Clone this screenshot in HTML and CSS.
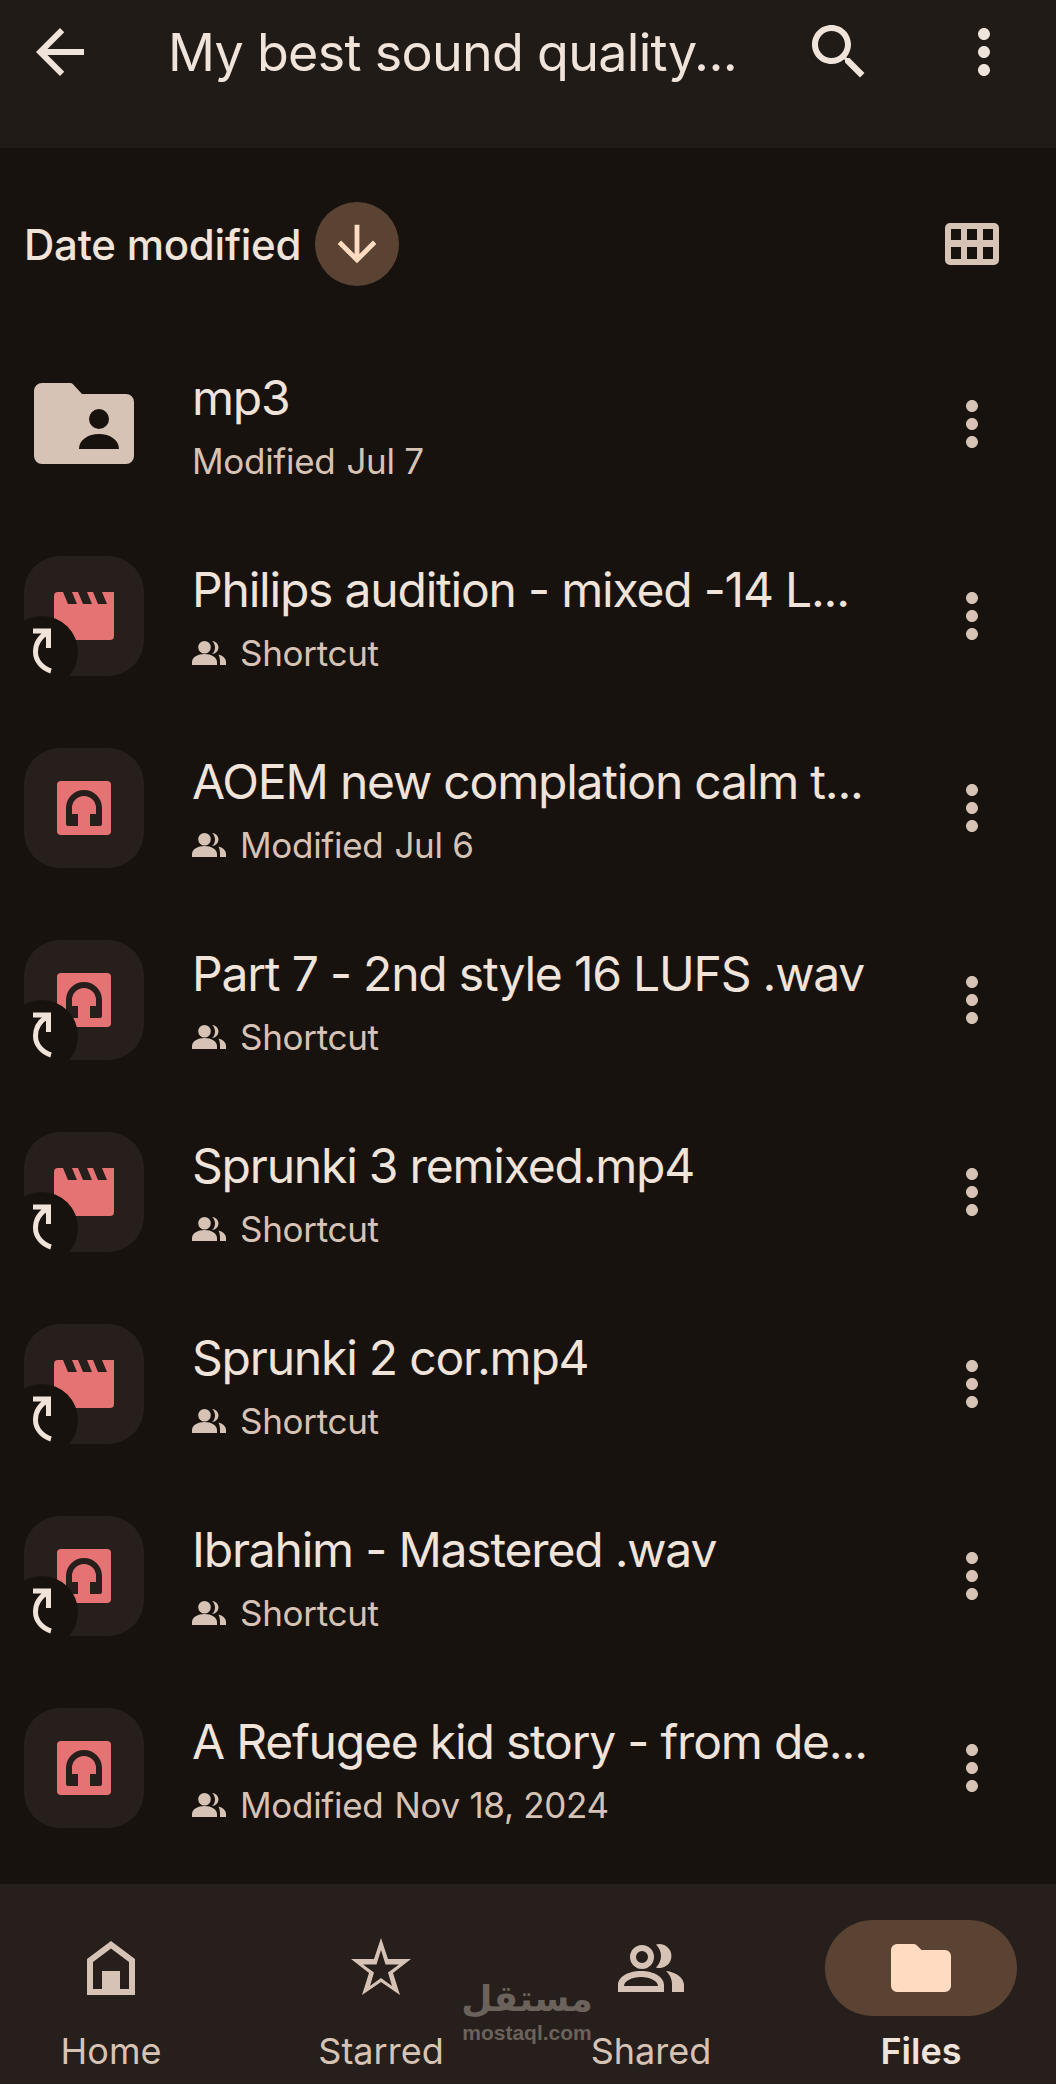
FILE: index.html
```html
<!DOCTYPE html>
<html>
<head>
    <title>My best sound quality</title>
    <meta charset="utf-8">
    <link rel="stylesheet" href="styles.css">
</head>
<body>
<svg class="defs" width="0" height="0">
    <symbol id="dots" viewBox="0 0 24 24"><path d="M12 8c1.100 0 2-.9 2-2s-.9-2-2-2-2 .9-2 2 .9 2 2 2zm0 2c-1.100 0-2 .9-2 2s.9 2 2 2 2-.9 2-2-.9-2-2-2zm0 6c-1.100 0-2 .9-2 2s.9 2 2 2 2-.9 2-2-.9-2-2-2z"/></symbol>
    <symbol id="people" viewBox="0 0 34 24"><path d="M12.500 0a6.300 6.300 0 1 1 0 12.600 6.300 6.300 0 0 1 0-12.600zM20 0a6.500 6.500 0 0 1 0 13c2-1.500 3-4 3-6.500S22 1.500 20 0zM0 24v-3c0-5 6-8 12.500-8S25 16 25 21v3zM26.500 13.500c4 1 7.500 3.500 7.500 7.500v3h-6v-3c0-3-.5-5.500-1.500-7.500z"/></symbol>
    <symbol id="shortcut" viewBox="0 0 120 120"><circle cx="18" cy="96" r="36" class="badge"/><path d="M9 75h15.500v17M24.500 76C15 81 11.500 89 11.500 96c0 9 7 16.500 15.500 19" class="arrow"/></symbol>
    <symbol id="video" viewBox="0 0 120 120"><path class="red" d="M34 36h56v44a4 4 0 0 1-4 4H30V40a4 4 0 0 1 4-4z"/><path class="cut" d="M39 36h9l5 12h-9zM54 36h9l5 12h-9zM69 36h9l5 12h-9z"/></symbol>
    <symbol id="audio" viewBox="0 0 120 120"><rect class="red" x="33" y="33" width="54" height="54" rx="4"/><path class="cut" d="M42 60a18 18 0 0 1 36 0v16a2 2 0 0 1-2 2H66V66h6v-6a12 12 0 0 0-24 0v6h6v12H44a2 2 0 0 1-2-2z"/></symbol>
</svg>

<div class="page">
    <div class="topbar">
        <svg class="icon72" viewBox="0 0 24 24"><path d="M20 11H7.830l5.590-5.590L12 4l-8 8 8 8 1.410-1.410L7.830 13H20v-2z"/></svg>
        <div class="folder-title">My best sound quality...</div>
        <svg class="icon72" viewBox="0 0 24 24"><path d="M15.500 14h-.79l-.28-.27C15.410 12.590 16 11.110 16 9.500 16 5.910 13.090 3 9.500 3S3 5.910 3 9.500 5.910 16 9.500 16c1.610 0 3.090-.59 4.230-1.570l.27.28v.79l5 4.990L20.490 19l-4.990-5zm-6 0C7.010 14 5 11.990 5 9.500S7.010 5 9.500 5 14 7.010 14 9.500 11.990 14 9.500 14z"/></svg>
        <svg class="icon72 top-dots" viewBox="0 0 24 24"><use href="#dots"/></svg>
    </div>

    <div class="sortbar">
        <span class="sort-label">Date modified</span>
        <span class="sort-dir">
            <svg viewBox="0 0 24 24"><path d="M20 12l-1.410-1.410L13 16.170V4h-2v12.170l-5.580-5.590L4 12l8 8 8-8z"/></svg>
        </span>
        <svg class="grid-toggle" viewBox="0 0 54 42"><path fill-rule="evenodd" d="M5 0h44a5 5 0 0 1 5 5v32a5 5 0 0 1-5 5H5a5 5 0 0 1-5-5V5a5 5 0 0 1 5-5zM6 6v11h10V6zm16 0v11h10V6zm16 0v11h10V6zM6 24v12h10V24zm16 0v12h10V24zm16 0v12h10V24z"/></svg>
    </div>

    <div class="filelist">
        <div class="row">
            <div class="thumb plain">
                <svg viewBox="0 0 120 120"><path class="folder" fill-rule="evenodd" d="M18 19h28a4 4 0 0 1 3 1.200L58 30h44a8 8 0 0 1 8 8v54a8 8 0 0 1-8 8H18a8 8 0 0 1-8-8V27a8 8 0 0 1 8-8zM75 45a10 10 0 1 0 0 20 10 10 0 0 0 0-20zM55 85h40c0-9-9-15-20-15s-20 6-20 15z"/></svg>
            </div>
            <div class="info">
                <div class="name">mp3</div>
                <div class="meta"><span class="meta-gap">Modified</span>Jul 7</div>
            </div>
            <svg class="icon72 more" viewBox="0 0 24 24"><use href="#dots"/></svg>
        </div>
        <div class="row">
            <div class="thumb"><svg viewBox="0 0 120 120"><use href="#video"/><use href="#shortcut"/></svg></div>
            <div class="info">
                <div class="name">Philips audition - mixed -14 L...</div>
                <div class="meta"><svg class="people" viewBox="0 0 34 24"><use href="#people"/></svg>Shortcut</div>
            </div>
            <svg class="icon72 more" viewBox="0 0 24 24"><use href="#dots"/></svg>
        </div>
        <div class="row">
            <div class="thumb"><svg viewBox="0 0 120 120"><use href="#audio"/></svg></div>
            <div class="info">
                <div class="name">AOEM new complation calm t...</div>
                <div class="meta"><svg class="people" viewBox="0 0 34 24"><use href="#people"/></svg><span class="meta-gap">Modified</span>Jul 6</div>
            </div>
            <svg class="icon72 more" viewBox="0 0 24 24"><use href="#dots"/></svg>
        </div>
        <div class="row">
            <div class="thumb"><svg viewBox="0 0 120 120"><use href="#audio"/><use href="#shortcut"/></svg></div>
            <div class="info">
                <div class="name">Part 7 - 2nd style 16 LUFS .wav</div>
                <div class="meta"><svg class="people" viewBox="0 0 34 24"><use href="#people"/></svg>Shortcut</div>
            </div>
            <svg class="icon72 more" viewBox="0 0 24 24"><use href="#dots"/></svg>
        </div>
        <div class="row">
            <div class="thumb"><svg viewBox="0 0 120 120"><use href="#video"/><use href="#shortcut"/></svg></div>
            <div class="info">
                <div class="name">Sprunki 3 remixed.mp4</div>
                <div class="meta"><svg class="people" viewBox="0 0 34 24"><use href="#people"/></svg>Shortcut</div>
            </div>
            <svg class="icon72 more" viewBox="0 0 24 24"><use href="#dots"/></svg>
        </div>
        <div class="row">
            <div class="thumb"><svg viewBox="0 0 120 120"><use href="#video"/><use href="#shortcut"/></svg></div>
            <div class="info">
                <div class="name">Sprunki 2 cor.mp4</div>
                <div class="meta"><svg class="people" viewBox="0 0 34 24"><use href="#people"/></svg>Shortcut</div>
            </div>
            <svg class="icon72 more" viewBox="0 0 24 24"><use href="#dots"/></svg>
        </div>
        <div class="row">
            <div class="thumb"><svg viewBox="0 0 120 120"><use href="#audio"/><use href="#shortcut"/></svg></div>
            <div class="info">
                <div class="name">Ibrahim - Mastered .wav</div>
                <div class="meta"><svg class="people" viewBox="0 0 34 24"><use href="#people"/></svg>Shortcut</div>
            </div>
            <svg class="icon72 more" viewBox="0 0 24 24"><use href="#dots"/></svg>
        </div>
        <div class="row">
            <div class="thumb"><svg viewBox="0 0 120 120"><use href="#audio"/></svg></div>
            <div class="info">
                <div class="name">A Refugee kid story - from de...</div>
                <div class="meta"><svg class="people" viewBox="0 0 34 24"><use href="#people"/></svg><span class="meta-gap">Modified</span>Nov 18, 2024</div>
            </div>
            <svg class="icon72 more" viewBox="0 0 24 24"><use href="#dots"/></svg>
        </div>
    </div>

    <div class="bottomnav">
        <div class="tab">
            <div class="tab-icon"><svg viewBox="0 0 64 64"><path fill-rule="evenodd" d="M32 5l24 18v36H8V23zM14 26v27h9V35h18v18h9V26L32 12.500z"/></svg></div>
            <div class="tab-label">Home</div>
        </div>
        <div class="tab">
            <div class="tab-icon"><svg viewBox="0 0 64 64"><path fill-rule="evenodd" d="M32 2l7 21h23L44 37l7 22-19-13-19 13 7-22L2 23h23zM32 14l-4.500 14.500H14l11 8L21 50l11-8 11 8-4-13.500 11-8H36.500z"/></svg></div>
            <div class="tab-label">Starred</div>
        </div>
        <div class="tab">
            <div class="tab-icon"><svg class="shared" viewBox="1 0 72 64"><path fill-rule="evenodd" d="M28 9a12 12 0 1 1 0 24 12 12 0 0 1 0-24zm0 6a6 6 0 1 0 0 12 6 6 0 0 0 0-12zM42 8.500a12 12 0 1 1 0 23c3-3 5-7 5-11.500s-2-8.500-5-11.500zM4 56v-7c0-8 10-14 23-14s23 6 23 14v7zM10 50h34c0-5-8-9-17-9s-17 4-17 9zM52 35c10 1 18 7 18 14v7H58v-7c0-6-2-10-6-14z"/></svg></div>
            <div class="tab-label">Shared</div>
        </div>
        <div class="tab active">
            <div class="tab-icon"><svg viewBox="0 0 64 64"><path d="M8 8h17a4 4 0 0 1 3 1.500L32.500 14H56a6 6 0 0 1 6 6v30a6 6 0 0 1-6 6H8a6 6 0 0 1-6-6V14a6 6 0 0 1 6-6z"/></svg></div>
            <div class="tab-label">Files</div>
        </div>
    </div>

    <div class="watermark">
        <div class="wm-ar">مستقل</div>
        <div class="wm-en">mostaql.com</div>
    </div>
</div>
</body>
</html>
```

FILE: styles.css
```css
* {
	padding: 0;
	margin: 0;
	box-sizing: border-box;
}

body {
	background: #18120e;
	color: #efe3da;
	font-family: Inter, "Noto Sans", sans-serif;
	overflow: hidden;
}

.defs {
	display: block;
}

.page {
	position: relative;
	width: 1056px;
	height: 2084px;
	display: flex;
	flex-direction: column;
}

.icon72 {
	display: block;
	width: 72px;
	height: 72px;
	fill: #efe3da;
	flex: none;
}

/* top bar */
.topbar {
	display: flex;
	align-items: center;
	height: 148px;
	padding: 0 36px 44px 24px;
	background: #211b17;
}

.folder-title {
	flex: 1;
	margin-left: 72px;
	font-size: 52px;
	letter-spacing: -0.7px;
	white-space: nowrap;
}

.top-dots {
	margin-left: 73px;
}

/* sort row */
.sortbar {
	display: flex;
	align-items: center;
	height: 180px;
	padding: 12px 57px 0 24px;
}

.sort-label {
	font-size: 42px;
	font-weight: 500;
	letter-spacing: -0.25px;
	color: #efe3da;
}

.sort-dir {
	display: flex;
	align-items: center;
	justify-content: center;
	width: 84px;
	height: 84px;
	margin-left: 14px;
	border-radius: 50%;
	background: #5a4332;
}

.sort-dir svg {
	width: 58px;
	height: 58px;
	fill: #ffdcc1;
}

.grid-toggle {
	width: 54px;
	height: 42px;
	margin-left: auto;
	fill: #d7c3b5;
}

/* file rows */
.row {
	display: flex;
	align-items: center;
	height: 192px;
	padding: 0 48px 0 24px;
}

.thumb {
	flex: none;
	width: 120px;
	height: 120px;
	border-radius: 36px;
	background: #261f1b;
	overflow: hidden;
}

.thumb.plain {
	background: none;
}

.thumb svg {
	display: block;
	width: 120px;
	height: 120px;
}

.red {
	fill: #e57373;
}

.cut {
	fill: #261f1b;
}

.badge {
	fill: #18120e;
}

.arrow {
	fill: none;
	stroke: #efe3da;
	stroke-width: 5;
}

.folder {
	fill: #d7c3b5;
}

.info {
	flex: 1;
	min-width: 0;
	margin-left: 48px;
	padding-top: 5px;
}

.name {
	font-size: 48px;
	line-height: 60px;
	letter-spacing: -1.2px;
	white-space: nowrap;
}

.meta {
	display: flex;
	align-items: center;
	margin-top: 8px;
	font-size: 35px;
	line-height: 50px;
	letter-spacing: -0.3px;
	color: #d7c3b5;
}

.meta-gap {
	margin-right: 11px;
}

.people {
	width: 34px;
	height: 24px;
	margin-right: 14px;
	fill: #d7c3b5;
}

.more {
	fill: #d7c3b5;
}

/* bottom nav */
.bottomnav {
	display: flex;
	justify-content: space-between;
	height: 200px;
	margin-top: 20px;
	padding: 36px 39px 0 15px;
	background: #261f1b;
}

.tab {
	width: 192px;
	text-align: center;
}

.tab-icon {
	display: flex;
	align-items: center;
	justify-content: center;
	height: 96px;
	border-radius: 48px;
}

.tab-icon svg {
	width: 64px;
	height: 64px;
	fill: #d7c3b5;
}

.tab-icon svg.shared {
	width: 72px;
}

.tab-label {
	margin-top: 13px;
	font-size: 36px;
	line-height: 44px;
	color: #d7c3b5;
}

.tab.active .tab-icon {
	background: #5a4332;
}

.tab.active .tab-icon svg {
	fill: #ffdcc1;
}

.tab.active .tab-label {
	font-weight: 600;
	color: #efe3da;
}

/* logo stamped over the screenshot */
.watermark {
	position: absolute;
	left: 460px;
	top: 1975px;
	width: 134px;
	text-align: center;
	color: #6b625c;
}

.wm-ar {
	font-family: "DejaVu Sans", sans-serif;
	font-size: 36px;
	font-weight: 700;
	line-height: 48px;
}

.wm-en {
	font-family: "Liberation Sans", sans-serif;
	font-size: 21px;
	font-weight: 700;
	line-height: 20px;
}
```
